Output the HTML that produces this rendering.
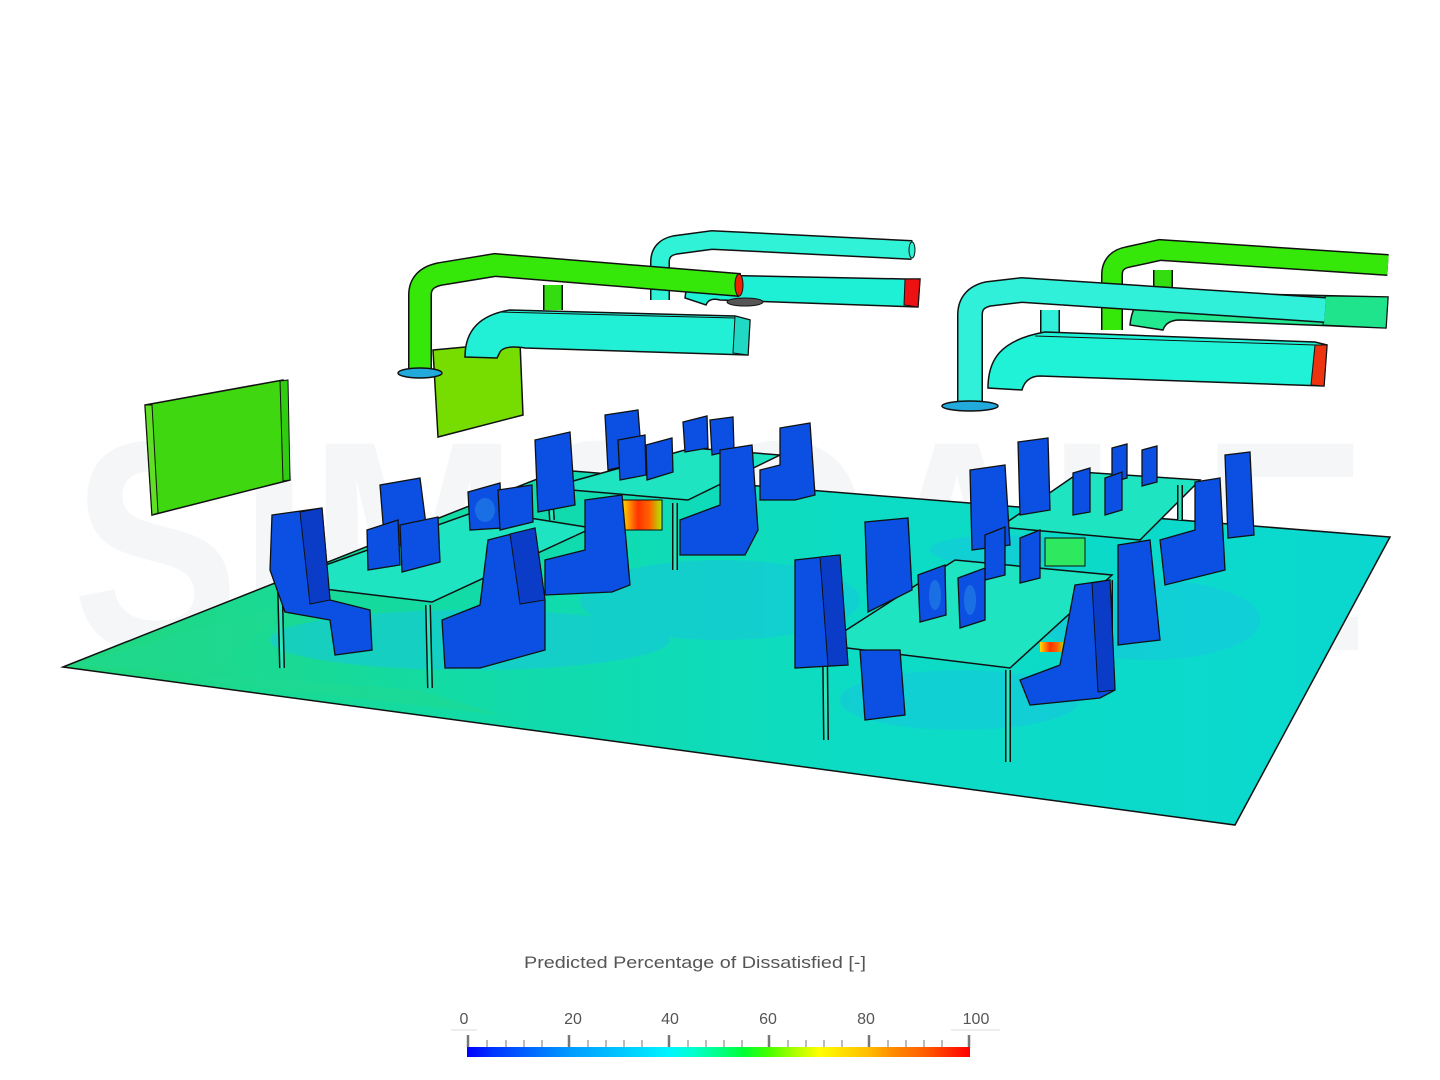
<!DOCTYPE html>
<html><head><meta charset="utf-8"><style>
html,body{margin:0;padding:0;background:#fff;width:1440px;height:1080px;overflow:hidden}
svg{display:block}
</style></head><body>
<svg width="1440" height="1080" viewBox="0 0 1440 1080" xmlns="http://www.w3.org/2000/svg">
<defs>
<linearGradient id="fl" x1="0" y1="0" x2="1" y2="0">
<stop offset="0" stop-color="#22d77c"/><stop offset="0.3" stop-color="#12dba6"/><stop offset="0.6" stop-color="#0cdcc4"/><stop offset="1" stop-color="#0ad8d0"/>
</linearGradient>
<linearGradient id="hot" x1="0" y1="0" x2="1" y2="0">
<stop offset="0" stop-color="#ffdd00"/><stop offset="0.4" stop-color="#ff3300"/><stop offset="0.7" stop-color="#ff6600"/><stop offset="1" stop-color="#aaee00"/>
</linearGradient>
<linearGradient id="leg" x1="0" y1="0" x2="1" y2="0">
<stop offset="0" stop-color="#0000ff"/><stop offset="0.05" stop-color="#0033ff"/><stop offset="0.1" stop-color="#0055ff"/><stop offset="0.15" stop-color="#0077ff"/><stop offset="0.2" stop-color="#0099ff"/><stop offset="0.3" stop-color="#00c4ff"/><stop offset="0.4" stop-color="#00f4ff"/><stop offset="0.45" stop-color="#00ffcc"/><stop offset="0.5" stop-color="#00ff88"/><stop offset="0.55" stop-color="#00ff33"/><stop offset="0.6" stop-color="#44ff00"/><stop offset="0.65" stop-color="#aaff00"/><stop offset="0.7" stop-color="#ffff00"/><stop offset="0.75" stop-color="#ffdd00"/><stop offset="0.8" stop-color="#ffbb00"/><stop offset="0.85" stop-color="#ff8800"/><stop offset="0.9" stop-color="#ff6600"/><stop offset="0.95" stop-color="#ff3300"/><stop offset="1" stop-color="#ff0000"/>
</linearGradient>
</defs>
<!-- watermark -->
<text x="72" y="650" font-family="Liberation Sans, sans-serif" font-weight="bold" font-size="300" fill="#f5f6f7" textLength="1296" lengthAdjust="spacingAndGlyphs">SIMSCALE</text>
<!-- floor -->
<polygon points="63,667 560,470 1390,537 1235,825" fill="url(#fl)" stroke="#111" stroke-width="1.5"/>
<g fill="#16c6de" opacity="0.55">
<ellipse cx="470" cy="640" rx="200" ry="30"/><ellipse cx="720" cy="600" rx="140" ry="40"/><ellipse cx="960" cy="700" rx="120" ry="30"/><ellipse cx="1150" cy="620" rx="110" ry="40"/><ellipse cx="1000" cy="550" rx="70" ry="15"/>
</g>
<g fill="#1fd991" opacity="0.6"><polygon points="70,665 300,600 200,680 500,715 420,690"/></g>

<!-- left wall monitor -->
<polygon points="145,405 283,380 290,480 152,515" fill="#3ed710" stroke="#111" stroke-width="1.5"/>
<polygon points="145,405 152,515 158,513 152,405" fill="#5fe024" stroke="#111" stroke-width="1"/>
<polygon points="280,381 288,380 290,480 283,481" fill="#30cc10" stroke="#111" stroke-width="1"/>
<!-- panel -->
<polygon points="433,350 520,342 523,415 438,437" fill="#77dd00" stroke="#111" stroke-width="1.5"/>

<!-- pipes: back cyan B -->
<g fill="none" stroke-linecap="butt">
<path d="M660,300 L660,262 Q660,248 675,245 L712,240 L912,250" stroke="#111" stroke-width="20"/>
<path d="M660,300 L660,262 Q660,248 675,245 L712,240 L912,250" stroke="#2ff2d6" stroke-width="17"/>
</g>
<ellipse cx="912" cy="250" rx="3" ry="8" fill="#2ff2d6" stroke="#111"/>
<path d="M685,298 C686,285 692,277 705,275 L905,279 L920,279 L918,307 L720,300 C712,298 708,300 706,305 Z" fill="#1ef0d6" stroke="#111" stroke-width="1.5"/>
<polygon points="905,279 920,279 918,307 904,305" fill="#ee1111" stroke="#111" stroke-width="1"/>
<ellipse cx="745" cy="302" rx="18" ry="4" fill="#555" stroke="#111"/>
<!-- green pipe A -->
<g fill="none">
<path d="M553,285 L553,310" stroke="#111" stroke-width="20"/><path d="M553,285 L553,310" stroke="#33dd10" stroke-width="17"/>
<path d="M420,368 L420,295 Q420,278 440,274 L495,265 L740,285" stroke="#111" stroke-width="24"/>
<path d="M420,368 L420,295 Q420,278 440,274 L495,265 L740,285" stroke="#36e80a" stroke-width="21"/>
</g>
<ellipse cx="739" cy="285" rx="4" ry="11" fill="#ee2200" stroke="#111"/>
<ellipse cx="420" cy="373" rx="22" ry="5" fill="#2ad" stroke="#111" stroke-width="1.5"/>
<path d="M465,357 C465,330 480,315 510,310 L735,316 L750,320 L748,355 L525,348 C512,346 503,347 500,352 L497,358 Z" fill="#22f0d6" stroke="#111" stroke-width="1.5"/>
<polygon points="735,316 750,320 748,355 733,353" fill="#20d8c4" stroke="#111" stroke-width="1"/>
<path d="M500,312 L735,318" stroke="#111" fill="none"/>

<!-- right: green pipe D -->
<g fill="none">
<path d="M1163,270 L1163,293" stroke="#111" stroke-width="20"/><path d="M1163,270 L1163,293" stroke="#33dd10" stroke-width="17"/>
<path d="M1112,330 L1112,275 Q1112,260 1128,257 L1160,250 L1388,265" stroke="#111" stroke-width="22"/>
<path d="M1112,330 L1112,275 Q1112,260 1128,257 L1160,250 L1388,265" stroke="#36e80a" stroke-width="19"/>
</g>
<path d="M1130,325 C1132,305 1140,295 1160,292 L1388,297 L1386,328 L1180,320 C1170,320 1165,324 1163,330 Z" fill="#22e890" stroke="#111" stroke-width="1.5"/>
<polygon points="1325,296 1388,297 1386,328 1323,325" fill="#20e48c" stroke="#111"/>
<!-- cyan pipe C -->
<g fill="none">
<path d="M970,405 L970,315 Q970,298 988,294 L1022,290 L1325,310" stroke="#111" stroke-width="26"/>
<path d="M970,405 L970,315 Q970,298 988,294 L1022,290 L1325,310" stroke="#30f0da" stroke-width="23"/>
<path d="M1050,310 L1050,335" stroke="#111" stroke-width="20"/><path d="M1050,310 L1050,335" stroke="#30f0da" stroke-width="17"/>
</g>
<ellipse cx="970" cy="406" rx="28" ry="5" fill="#2ad" stroke="#111" stroke-width="1.5"/>
<path d="M988,388 C988,360 1000,340 1045,332 L1315,342 L1327,345 L1324,386 L1040,376 C1030,376 1024,382 1022,390 Z" fill="#1ff2d6" stroke="#111" stroke-width="1.5"/>
<polygon points="1315,345 1327,345 1324,386 1311,385" fill="#ee3311" stroke="#111"/>
<path d="M1035,336 L1315,345" stroke="#111" fill="none"/>

<!-- tables tops -->
<g fill="#1ee4c2" stroke="#111" stroke-width="1.5">
<polygon points="548,488 688,500 780,455 692,448"/>
<polygon points="275,583 432,602 592,528 480,510"/>
<polygon points="1000,527 1140,540 1200,480 1080,472"/>
<polygon points="823,645 1010,668 1112,575 955,560"/>
</g>
<rect x="622" y="500" width="40" height="30" fill="url(#hot)" stroke="#111"/>
<rect x="483" y="628" width="38" height="22" fill="url(#hot)" stroke="#111"/>
<rect x="1040" y="642" width="25" height="10" fill="url(#hot)"/>
<rect x="1045" y="538" width="40" height="28" fill="#2ee860" stroke="#111"/>
<rect x="700" y="520" width="20" height="20" fill="#33dd44" stroke="#111"/>
<g stroke="#111" stroke-width="6" fill="none"><path d="M280,588 L282,668 M428,605 L430,688 M675,503 L675,570 M550,492 L552,520 M825,650 L826,740 M1008,670 L1008,762 M1110,580 L1110,640 M1180,485 L1180,520"/></g>
<g stroke="#2ce6c0" stroke-width="3" fill="none"><path d="M280,588 L282,668 M428,605 L430,688 M675,503 L675,570 M550,492 L552,520 M825,650 L826,740 M1008,670 L1008,762 M1110,580 L1110,640 M1180,485 L1180,520"/></g>

<!-- chairs & monitors -->
<g fill="#0b50e2" stroke="#111" stroke-width="1.3">
<polygon points="535,440 570,432 575,505 538,512"/>
<polygon points="605,415 638,410 642,462 608,470"/>
<polygon points="618,440 645,435 646,475 620,480"/>
<polygon points="646,445 672,438 673,472 647,480"/>
<polygon points="683,422 707,416 708,448 685,452"/>
<polygon points="710,420 733,417 734,450 712,455"/>
<polygon points="780,428 810,423 815,495 795,500 760,500 760,470 780,465"/>
<polygon points="720,450 752,445 758,530 745,555 680,555 680,520 720,505"/>
<polygon points="468,492 500,483 502,528 470,530"/>
<polygon points="498,490 532,485 533,522 500,530"/>
<polygon points="380,485 420,478 428,540 385,548"/>
<polygon points="272,515 322,508 330,600 370,610 372,650 335,655 330,620 285,612 270,570"/>
<polygon points="367,530 398,520 400,565 368,570"/>
<polygon points="400,525 438,517 440,562 402,572"/>
<polygon points="585,500 622,495 630,585 612,592 545,595 545,560 585,550"/>
<polygon points="488,540 535,528 545,600 545,650 480,668 445,668 442,620 480,605"/>
<polygon points="970,470 1005,465 1010,545 972,550"/>
<polygon points="1018,442 1048,438 1050,510 1020,515"/>
<polygon points="1112,448 1127,444 1127,478 1112,482"/>
<polygon points="1142,450 1157,446 1157,482 1142,486"/>
<polygon points="1073,473 1090,468 1090,512 1073,515"/>
<polygon points="1105,478 1122,472 1122,510 1105,515"/>
<polygon points="1225,455 1250,452 1254,535 1228,538"/>
<polygon points="1195,482 1220,478 1225,570 1165,585 1160,540 1195,530"/>
<polygon points="985,535 1005,527 1005,575 985,580"/>
<polygon points="1020,538 1040,530 1040,578 1020,583"/>
<polygon points="865,522 908,518 912,590 868,612"/>
<polygon points="795,560 840,555 848,665 795,668"/>
<polygon points="918,575 945,565 946,615 920,622"/>
<polygon points="958,578 985,568 985,620 960,628"/>
<polygon points="1118,545 1150,540 1160,640 1118,645"/>
<polygon points="1075,585 1110,580 1115,690 1100,698 1030,705 1020,680 1060,665"/>
<polygon points="860,650 900,650 905,715 865,720"/>
</g>
<g fill="#0a3cc8" stroke="#111" stroke-width="1">
<polygon points="300,512 322,508 330,600 310,604"/>
<polygon points="510,534 535,528 545,600 520,604"/>
<polygon points="820,557 840,555 848,665 828,666"/>
<polygon points="1092,583 1110,580 1115,690 1098,692"/>
</g>
<g fill="#2a8ee8" opacity="0.5"><ellipse cx="485" cy="510" rx="10" ry="12"/><ellipse cx="935" cy="595" rx="6" ry="15"/><ellipse cx="970" cy="600" rx="6" ry="15"/></g>

<!-- legend -->
<text x="524" y="968" font-family="Liberation Sans, sans-serif" font-size="17" fill="#555" textLength="342" lengthAdjust="spacingAndGlyphs">Predicted Percentage of Dissatisfied [-]</text>
<g font-family="Liberation Sans, sans-serif" font-size="16" fill="#555" text-anchor="middle">
<text x="464" y="1024">0</text><text x="573" y="1024">20</text><text x="670" y="1024">40</text><text x="768" y="1024">60</text><text x="866" y="1024">80</text><text x="976" y="1024">100</text>
</g>
<line x1="451" y1="1030" x2="477" y2="1030" stroke="#e8e8e8" stroke-width="1.5"/>
<line x1="951" y1="1030" x2="1000" y2="1030" stroke="#e8e8e8" stroke-width="1.5"/>
<rect x="467" y="1047" width="503" height="10" fill="url(#leg)"/>
<g stroke="#bbb" stroke-width="2">
<path d="M487,1040V1047M506,1040V1047M524,1040V1047M542,1040V1047M588,1040V1047M606,1040V1047M624,1040V1047M642,1040V1047M688,1040V1047M706,1040V1047M724,1040V1047M742,1040V1047M788,1040V1047M806,1040V1047M824,1040V1047M842,1040V1047M888,1040V1047M906,1040V1047M924,1040V1047M942,1040V1047"/>
</g>
<g stroke="#777" stroke-width="2.5"><path d="M468,1035V1047M569,1035V1047M669,1035V1047M769,1035V1047M869,1035V1047M969,1035V1047"/></g>
</svg>
</body></html>
